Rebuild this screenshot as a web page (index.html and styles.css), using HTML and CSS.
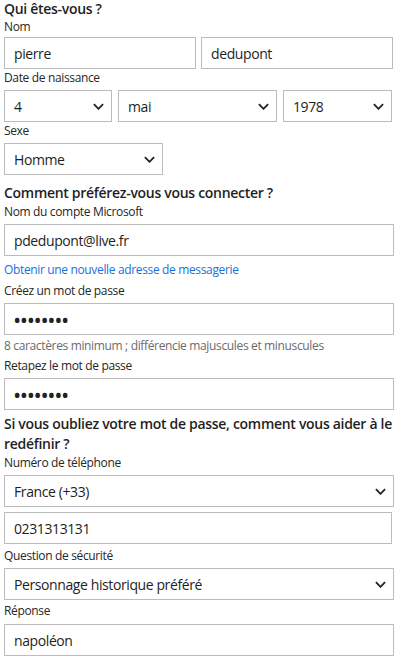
FILE: index.html
```html
<!DOCTYPE html>
<html lang="fr">
<head>
<meta charset="utf-8">
<title>Créer un compte</title>
<link rel="stylesheet" href="styles.css">
</head>
<body>
<form class="form">
  <h2 class="heading heading-first">Qui êtes-vous ?</h2>
  <div class="label label-first">Nom</div>
  <div class="row-two">
    <div class="control">pierre</div>
    <div class="control">dedupont</div>
  </div>

  <div class="label">Date de naissance</div>
  <div class="row-three">
    <div class="control select"><span>4</span><svg class="chev" viewBox="0 0 12 7"><polyline points="1,1 6,6 11,1"/></svg></div>
    <div class="control select"><span>mai</span><svg class="chev" viewBox="0 0 12 7"><polyline points="1,1 6,6 11,1"/></svg></div>
    <div class="control select"><span>1978</span><svg class="chev" viewBox="0 0 12 7"><polyline points="1,1 6,6 11,1"/></svg></div>
  </div>

  <div class="label">Sexe</div>
  <div class="control select sex"><span>Homme</span><svg class="chev" viewBox="0 0 12 7"><polyline points="1,1 6,6 11,1"/></svg></div>

  <h2 class="heading heading-gap">Comment préférez-vous vous connecter ?</h2>
  <div class="label">Nom du compte Microsoft</div>
  <div class="control">pdedupont@live.fr</div>
  <a class="link" href="#">Obtenir une nouvelle adresse de messagerie</a>

  <div class="label label-after-link">Créez un mot de passe</div>
  <div class="control password">••••••••</div>
  <div class="hint">8 caractères minimum ; différencie majuscules et minuscules</div>
  <div class="label label-after-hint">Retapez le mot de passe</div>
  <div class="control password">••••••••</div>

  <h2 class="heading heading-gap2">Si vous oubliez votre mot de passe, comment vous aider à le redéfinir ?</h2>
  <div class="label">Numéro de téléphone</div>
  <div class="control select"><span>France (+33)</span><svg class="chev" viewBox="0 0 12 7"><polyline points="1,1 6,6 11,1"/></svg></div>
  <div class="control phone">0231313131</div>

  <div class="label">Question de sécurité</div>
  <div class="control select"><span>Personnage historique préféré</span><svg class="chev" viewBox="0 0 12 7"><polyline points="1,1 6,6 11,1"/></svg></div>
  <div class="label label-answer">Réponse</div>
  <div class="control">napoléon</div>
</form>
</body>
</html>
```

FILE: styles.css
```css
html, body {
  margin: 0;
  padding: 0;
  background: #ffffff;
}

body {
  font-family: "Open Sans", "Noto Sans", "DejaVu Sans", sans-serif;
  color: #222222;
}

.form {
  width: 390px;
  margin: 0 2px 0 4px;
  display: flex;
  flex-direction: column;
}

.heading {
  margin: 0;
  font-size: 14px;
  font-weight: 600;
  letter-spacing: -0.3px;
  line-height: 20px;
  color: #1f1f1f;
}

.heading-first {
  line-height: 18px;
}

.heading-gap {
  margin-top: 8px;
}

.heading-gap2 {
  margin-top: 4px;
}

.label {
  font-size: 12px;
  letter-spacing: -0.35px;
  line-height: 18px;
  margin-bottom: 3px;
  color: #262626;
}

.label-first {
  margin-bottom: 1px;
}

.label-after-link {
  margin-top: 3px;
}

.label-after-hint {
  margin-top: 2px;
}

.label-answer {
  margin-top: 2px;
  margin-bottom: 4px;
}

.row-two {
  display: grid;
  grid-template-columns: 1fr 1fr;
  gap: 5px;
  margin-right: 1px;
}

.row-three {
  display: grid;
  grid-template-columns: 108px 159px 1fr;
  gap: 6px;
  margin-right: 2px;
}

.control {
  box-sizing: border-box;
  height: 32px;
  border: 1px solid #bcbcbc;
  background: #ffffff;
  padding: 0 9px;
  display: flex;
  align-items: center;
  font-size: 14px;
  letter-spacing: -0.4px;
  color: #1e1e1e;
  white-space: nowrap;
}

.select {
  justify-content: space-between;
  padding: 0 7px 0 9px;
}

.sex {
  width: 159px;
}

.chev {
  width: 11px;
  height: 7px;
  flex: none;
  fill: none;
  stroke: #222222;
  stroke-width: 2;
}

.password {
  font-size: 22px;
  letter-spacing: -1.4px;
  padding-left: 8px;
  color: #222222;
}

.phone {
  margin-top: 5px;
  margin-right: 2px;
  margin-bottom: 3px;
}

.link {
  margin-top: 5px;
  font-size: 12px;
  letter-spacing: -0.35px;
  line-height: 18px;
  color: #1a6fd8;
  text-decoration: none;
}

.hint {
  margin-top: 2px;
  font-size: 12px;
  letter-spacing: -0.35px;
  line-height: 18px;
  color: #6b6b6b;
}
```
